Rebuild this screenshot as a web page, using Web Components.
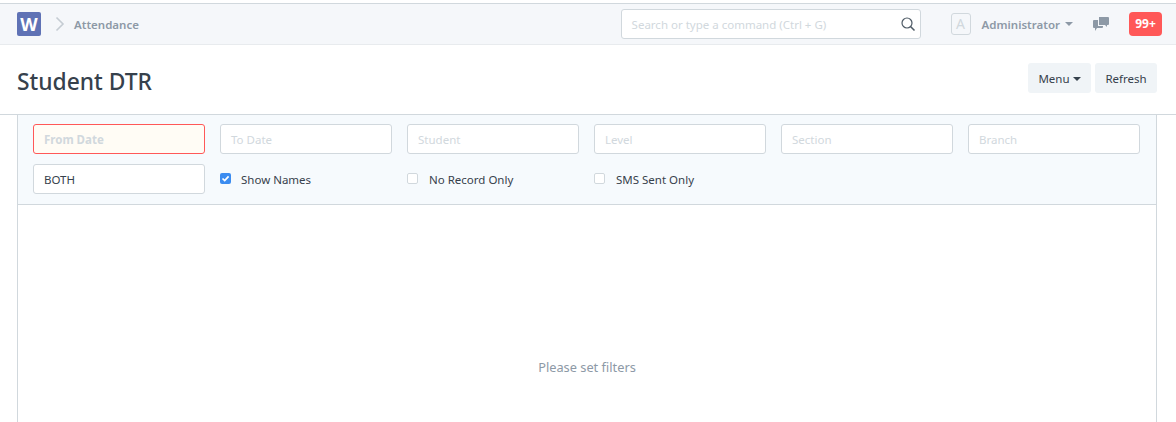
<!DOCTYPE html>
<html>
<head>
<meta charset="utf-8">
<title>Student DTR</title>
<style>
  html, body { margin: 0; padding: 0; background: #fff; }
  body { font-family: "Noto Sans", sans-serif; font-size: 11.5px; color: #36414c; height: 422px; overflow: hidden; }
</style>
</head>
<body>
<app-navbar></app-navbar>
<page-head title="Student DTR"></page-head>
<report-panel>
  <filter-field placeholder="From Date" error></filter-field>
  <filter-field placeholder="To Date"></filter-field>
  <filter-field placeholder="Student"></filter-field>
  <filter-field placeholder="Level"></filter-field>
  <filter-field placeholder="Section"></filter-field>
  <filter-field placeholder="Branch"></filter-field>
  <filter-field value="BOTH"></filter-field>
  <filter-check label="Show Names" checked></filter-check>
  <filter-check label="No Record Only"></filter-check>
  <filter-check label="SMS Sent Only"></filter-check>
</report-panel>
<script>
class AppNavbar extends HTMLElement {
    connectedCallback() {
        this.attachShadow({mode: "open"});
        this.shadowRoot.innerHTML = `
        <style>
            :host { display: block; margin-top: 3px; height: 40px; background: #f5f7fa; border-top: 1px solid #d1d8dd; border-bottom: 1px solid #e8ebee; }
            .bar { display: flex; align-items: center; height: 40px; padding: 0 14px 0 17px; }
            .logo { width: 24px; height: 24px; border-radius: 2px; background: #5f72b5; color: #fff; font: bold 18px/24px "Noto Sans", sans-serif; text-align: center; }
            .sep { margin-left: 14px; display: block; }
            .crumb { margin-left: 9px; font-size: 11.5px; font-weight: 600; color: #8d99a6; line-height: 16px; padding-top: 1px; }
            .search { margin-left: auto; box-sizing: border-box; width: 300px; height: 30px; display: flex; align-items: center; justify-content: space-between; padding: 1px 3px 0 10px; background: #fff; border: 1px solid #d1d8dd; border-radius: 3px; color: #d1d8dd; font-size: 11.5px; }
            .search svg { display: block; margin-top: -1px; }
            .avatar { box-sizing: border-box; margin-left: 30px; width: 20px; height: 22px; border: 1px solid #d1d8dd; border-radius: 3px; color: #d1d8dd; font-size: 14px; line-height: 20px; text-align: center; }
            .user { margin-left: 11px; font-weight: 600; color: #8d99a6; font-size: 11.5px; line-height: 16px; padding-top: 1px; }
            .caret { margin-left: 5px; width: 0; height: 0; border-left: 4px solid transparent; border-right: 4px solid transparent; border-top: 4px solid #8d99a6; }
            .chat { margin-left: 20px; display: block; }
            .badge { margin-left: 20px; width: 33px; height: 24px; border-radius: 4px; background: #ff5858; color: #fff; font-weight: 700; font-size: 12px; line-height: 24px; text-align: center; }
        </style>
        <div class="bar">
            <div class="logo">W</div>
            <svg class="sep" width="10" height="16" viewBox="0 0 10 16" fill="none" stroke="#c5ccd3" stroke-width="1.6"><path d="M1.5 1.5 8 8 1.5 14.5"/></svg>
            <span class="crumb">Attendance</span>
            <div class="search"><span>Search or type a command (Ctrl + G)</span>
                <svg width="18" height="18" viewBox="0 0 18 18" fill="none" stroke="#4f5b66" stroke-width="1.2"><circle cx="8" cy="8" r="5"/><path d="M11.5 11.5 15.5 15.5" stroke-width="1.6"/></svg>
            </div>
            <div class="avatar">A</div>
            <span class="user">Administrator</span>
            <span class="caret"></span>
            <svg class="chat" width="16" height="14" viewBox="0 0 16 14" fill="#8d99a6"><path d="M6 0h9a1 1 0 0 1 1 1v6a1 1 0 0 1-1 1h-1v2l-2-2H6z"/><path d="M1 3h4v6h5v1a1 1 0 0 1-1 1H4l-2 3v-3H1a1 1 0 0 1-1-1V4a1 1 0 0 1 1-1z"/></svg>
            <div class="badge">99+</div>
        </div>
      `;
    }
}

class PageHead extends HTMLElement {
    connectedCallback() {
        this.attachShadow({mode: "open"});
        this.shadowRoot.innerHTML = `
        <style>
            :host { display: block; height: 69px; border-bottom: 1px solid #d1d8dd; }
            .head { display: flex; align-items: center; justify-content: space-between; height: 69px; box-sizing: border-box; padding: 0 19px 0 17px; }
            h1 { margin: 0 0 -5px; font-size: 22.8px; font-weight: 500; color: #36414c; line-height: 30px; }
            .actions { display: flex; gap: 4px; margin-top: -3px; }
            button { font: 11.5px "Noto Sans", sans-serif; color: #36414c; height: 30px; width: 62px; border: 0; border-radius: 3px; background: #f0f4f7; padding: 0; }
            button.menu { width: 63px; }
            .down { display: inline-block; vertical-align: middle; margin-left: 0; border-left: 4px solid transparent; border-right: 4px solid transparent; border-top: 4px solid #36414c; }
        </style>
        <div class="head">
            <h1>${this.getAttribute("title")}</h1>
            <div class="actions">
                <button class="menu">Menu <span class="down"></span></button>
                <button>Refresh</button>
            </div>
        </div>
      `;
    }
}

class ReportPanel extends HTMLElement {
    connectedCallback() {
        this.attachShadow({mode: "open"});
        this.shadowRoot.innerHTML = `
        <style>
            :host { display: block; margin: 0 19px 0 17px; height: 307px; border-left: 1px solid #d1d8dd; border-right: 1px solid #d1d8dd; }
            .filters { display: grid; grid-template-columns: repeat(6, 172px); grid-auto-rows: 30px; gap: 10px 15px; padding: 9px 15px 10px; height: 70px; background: #f6fafd; border-bottom: 1px solid #d1d8dd; }
            .msg { text-align: center; padding-top: 153px; font-size: 12.8px; color: #8d99a6; line-height: 18px; }
        </style>
        <div class="filters"><slot></slot></div>
        <div class="msg">Please set filters</div>
      `;
    }
}

class FilterField extends HTMLElement {
    connectedCallback() {
        this.attachShadow({mode: "open"});
        const value = this.getAttribute("value");
        const text = value || this.getAttribute("placeholder");
        this.shadowRoot.innerHTML = `
        <style>
            :host { display: block; box-sizing: border-box; height: 30px; padding: 1px 10px 0; background: #fff; border: 1px solid #d1d8dd; border-radius: 3px; font-size: 11.5px; line-height: 28px; color: ${value ? "#36414c" : "#d1d8dd"}; }
            :host([error]) { border-color: #ff5858; background: #fffcf5; font-weight: 700; }
        </style>
        <span>${text}</span>
      `;
    }
}

class FilterCheck extends HTMLElement {
    connectedCallback() {
        this.attachShadow({mode: "open"});
        const checked = this.hasAttribute("checked");
        const tick = checked
            ? `<svg width="11" height="11" viewBox="0 0 11 11"><rect width="11" height="11" rx="2" fill="#3b8cf0"/><path d="M2.5 5.5 4.7 7.6 8.6 3.4" fill="none" stroke="#fff" stroke-width="1.7"/></svg>`
            : `<svg width="11" height="11" viewBox="0 0 11 11"><rect x=".5" y=".5" width="10" height="10" rx="1.5" fill="#fff" stroke="#d1d8dd"/></svg>`;
        this.shadowRoot.innerHTML = `
        <style>
            :host { display: flex; align-items: center; height: 30px; font-size: 11.5px; color: #36414c; }
            svg { display: block; margin-right: ${checked ? 10 : 11}px; margin-top: -1px; }
        </style>
        ${tick}<span>${this.getAttribute("label")}</span>
      `;
    }
}

customElements.define("app-navbar", AppNavbar);
customElements.define("page-head", PageHead);
customElements.define("report-panel", ReportPanel);
customElements.define("filter-field", FilterField);
customElements.define("filter-check", FilterCheck);
</script>
</body>
</html>
